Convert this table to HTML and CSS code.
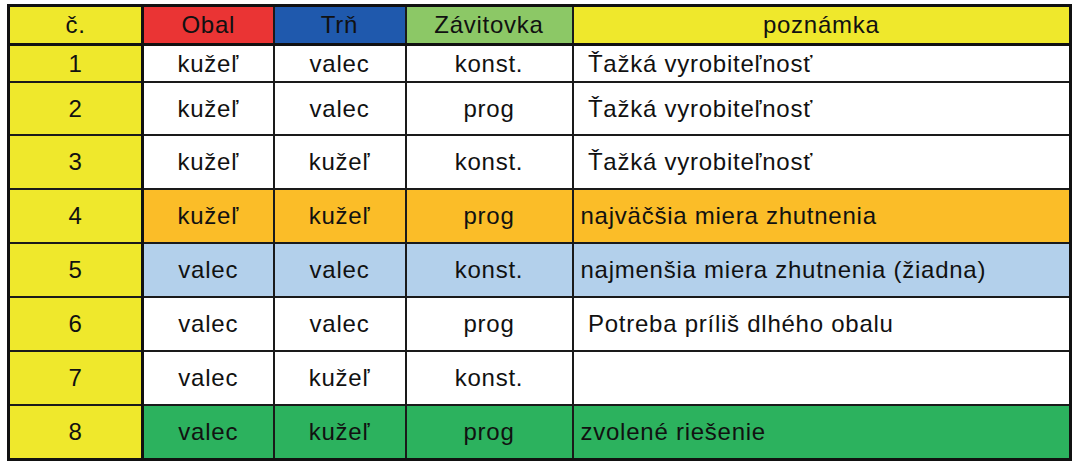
FILE: index.html
```html
<!DOCTYPE html>
<html lang="sk">
<head>
<meta charset="utf-8">
<title>Varianty</title>
<link rel="stylesheet" href="styles.css">
</head>
<body>
<table class="grid">
  <colgroup>
    <col class="c-num">
    <col class="c-obal">
    <col class="c-trn">
    <col class="c-zav">
    <col class="c-note">
  </colgroup>
  <thead>
    <tr class="r-head">
      <th class="num">č.</th>
      <th class="h-red">Obal</th>
      <th class="h-blue">Trň</th>
      <th class="h-green">Závitovka</th>
      <th class="h-yellow">poznámka</th>
    </tr>
  </thead>
  <tbody>
    <tr class="r1">
      <td class="num">1</td><td>kužeľ</td><td>valec</td><td>konst.</td><td class="note">&nbsp;Ťažká vyrobiteľnosť</td>
    </tr>
    <tr class="r2">
      <td class="num">2</td><td>kužeľ</td><td>valec</td><td>prog</td><td class="note">&nbsp;Ťažká vyrobiteľnosť</td>
    </tr>
    <tr class="r-tall">
      <td class="num">3</td><td>kužeľ</td><td>kužeľ</td><td>konst.</td><td class="note">&nbsp;Ťažká vyrobiteľnosť</td>
    </tr>
    <tr class="r-tall orange">
      <td class="num">4</td><td>kužeľ</td><td>kužeľ</td><td>prog</td><td class="note">najväčšia miera zhutnenia</td>
    </tr>
    <tr class="r-tall lightblue">
      <td class="num">5</td><td>valec</td><td>valec</td><td>konst.</td><td class="note">najmenšia miera zhutnenia (žiadna)</td>
    </tr>
    <tr class="r-tall">
      <td class="num">6</td><td>valec</td><td>valec</td><td>prog</td><td class="note">&nbsp;Potreba príliš dlhého obalu</td>
    </tr>
    <tr class="r-tall">
      <td class="num">7</td><td>valec</td><td>kužeľ</td><td>konst.</td><td class="note"></td>
    </tr>
    <tr class="r-last green">
      <td class="num">8</td><td>valec</td><td>kužeľ</td><td>prog</td><td class="note">zvolené riešenie</td>
    </tr>
  </tbody>
</table>
</body>
</html>
```

FILE: styles.css
```css
html, body {
  margin: 0;
  padding: 0;
  background: #ffffff;
}

body {
  padding: 4px 0 0 7px;
  font-family: "Liberation Sans", Arial, sans-serif;
  font-size: 24px;
  letter-spacing: 0.75px;
  color: #111111;
}

.grid {
  border-collapse: collapse;
  table-layout: fixed;
  width: 1065px;
  border: 3px solid #111111;
}

.c-num { width: 134px; }
.c-obal { width: 131px; }
.c-trn { width: 132px; }
.c-zav { width: 167px; }
.c-note { width: 498px; }

.grid th,
.grid td {
  border: 2px solid #1a1a1a;
  padding: 0;
  text-align: center;
  vertical-align: middle;
  font-weight: normal;
  white-space: nowrap;
  line-height: 1;
}

.grid .num {
  background: #efe82c;
  border-right: 3px solid #111111;
}

.r-head th {
  height: 36px;
  border-bottom: 3px solid #111111;
}

.h-red { background: #ea3434; }
.h-blue { background: #1f59ad; }
.h-green { background: #8cc866; }
.h-yellow { background: #efe82c; }

.r1 td { height: 35px; }
.r2 td { height: 51px; }
.r-tall td { height: 52px; }
.r-last td { height: 52px; }

.grid td.note {
  text-align: left;
  padding-left: 7px;
}

.orange td { background: #fbbd28; }
.lightblue td { background: #b3d0eb; }
.green td { background: #2cb25e; }

.orange td.num,
.lightblue td.num,
.green td.num { background: #efe82c; }
```
